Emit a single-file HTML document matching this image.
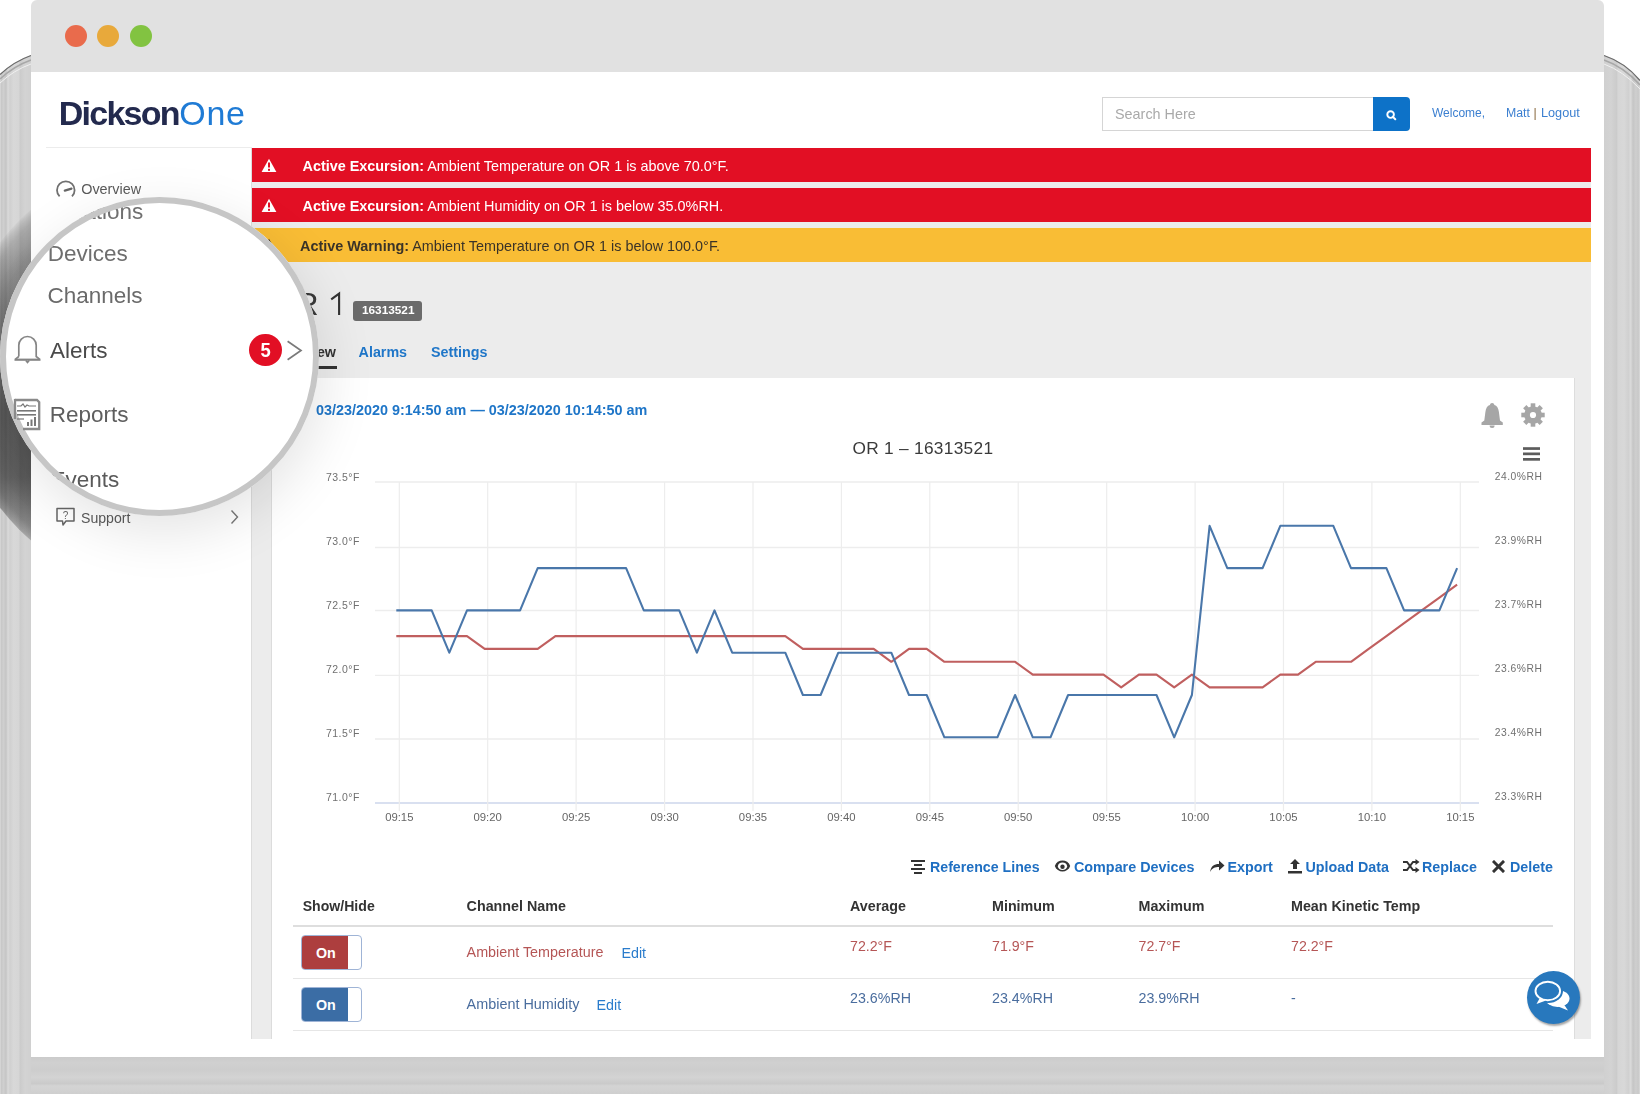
<!DOCTYPE html>
<html><head><meta charset="utf-8"><style>
html,body{margin:0;padding:0;}
body{width:1640px;height:1094px;overflow:hidden;position:relative;background:#fff;font-family:"Liberation Sans", sans-serif;}
.t{position:absolute;white-space:nowrap;line-height:1;}
.r{position:absolute;}
svg{position:absolute;left:0;top:0;}
</style></head><body>
<svg width="1640" height="1094" viewBox="0 0 1640 1094" style="left:0;top:0"><defs><linearGradient id="gL" x1="0" y1="0" x2="1" y2="0"><stop offset="0.0000" stop-color="#dadada"/><stop offset="0.0484" stop-color="#c8c8c8"/><stop offset="0.1129" stop-color="#cfcfcf"/><stop offset="0.1935" stop-color="#c5c5c5"/><stop offset="0.2581" stop-color="#dadada"/><stop offset="0.3226" stop-color="#d0d0d0"/><stop offset="0.4355" stop-color="#d8d8d8"/><stop offset="0.6129" stop-color="#d6d6d6"/><stop offset="0.6452" stop-color="#cbcbcb"/><stop offset="0.8065" stop-color="#d3d3d3"/><stop offset="1.0000" stop-color="#d0d0d0"/></linearGradient><linearGradient id="gR" x1="0" y1="0" x2="1" y2="0"><stop offset="0.0000" stop-color="#d0d0d0"/><stop offset="0.1935" stop-color="#d3d3d3"/><stop offset="0.3548" stop-color="#cbcbcb"/><stop offset="0.3871" stop-color="#d6d6d6"/><stop offset="0.5645" stop-color="#d8d8d8"/><stop offset="0.6774" stop-color="#d0d0d0"/><stop offset="0.7419" stop-color="#dadada"/><stop offset="0.8065" stop-color="#c5c5c5"/><stop offset="0.8871" stop-color="#cfcfcf"/><stop offset="0.9516" stop-color="#c8c8c8"/><stop offset="1.0000" stop-color="#dadada"/></linearGradient><linearGradient id="gB" x1="0" y1="0" x2="0" y2="1"><stop offset="0" stop-color="#cbcbcb"/><stop offset="0.15" stop-color="#d0d0d0"/><stop offset="0.35" stop-color="#cdcdcd"/><stop offset="0.55" stop-color="#d3d3d3"/><stop offset="0.72" stop-color="#cacaca"/><stop offset="0.78" stop-color="#d4d4d4"/><stop offset="1" stop-color="#cfcfcf"/></linearGradient></defs><path d="M31,55 Q14,61 0,74 V1094 H31 Z" fill="url(#gL)"/><path d="M31,55.5 Q14,61.5 0,74.5" fill="none" stroke="#6a6a6a" stroke-width="1.2"/><path d="M31,60 Q14,66 0,79" fill="none" stroke="#a8a8a8" stroke-width="1.6"/><path d="M31,64 Q14,70 0,83" fill="none" stroke="#f0f0f0" stroke-width="1"/><path d="M1604,55 Q1625,62 1640,80 V1094 H1604 Z" fill="url(#gR)" transform="translate(0,0)"/><path d="M1604,55.5 Q1625,62.5 1640,80.5" fill="none" stroke="#6a6a6a" stroke-width="1.2"/><path d="M1604,60 Q1624,67 1640,85" fill="none" stroke="#a8a8a8" stroke-width="1.6"/><path d="M1604,64 Q1623,71 1640,89" fill="none" stroke="#f0f0f0" stroke-width="1"/><rect x="31" y="1057" width="1573" height="37" fill="url(#gB)"/></svg>
<div class="r" style="left:0;top:55px;width:31px;height:1039px;overflow:hidden;"><div class="r" style="left:-45.5px;top:102px;width:436px;height:436px;border-radius:50%;mix-blend-mode:multiply;background:radial-gradient(circle 218px at 218px 218px,#a0a0a0 0px,#a0a0a0 163px,#b2b2b2 188px,#cecece 208px,#e8e8e8 215px,#ffffff 219px),linear-gradient(180deg,#fff 0px,#fff 90px,#a6a6a6 250px,#a0a0a0 320px,#dedede 395px,#fff 436px);background-blend-mode:multiply;"></div></div>
<div class="r" style="left:31px;top:0px;width:1573px;height:1057px;background:#fff;border-radius:6px 6px 0 0;overflow:hidden;"></div>
<div class="r" style="left:31px;top:0px;width:1573px;height:72px;background:#e1e1e1;border-radius:6px 6px 0 0;"></div>
<div class="r" style="left:64.5px;top:25.3px;width:22px;height:22px;background:#e96b4c;border-radius:50%;"></div>
<div class="r" style="left:97.3px;top:25.3px;width:22px;height:22px;background:#e8a93b;border-radius:50%;"></div>
<div class="r" style="left:130.3px;top:25.3px;width:22px;height:22px;background:#82c341;border-radius:50%;"></div>
<div class="t" style="left:58.8px;top:96.2px;font-size:34px;color:#232a4e;font-weight:bold;"><span style="letter-spacing:-1.75px">Dickson</span><span style="color:#1f7bd5;font-weight:normal;letter-spacing:0.7px;margin-left:0.5px">One</span></div>
<div class="r" style="left:46px;top:146.5px;width:206px;height:1.5px;background:#ececec;"></div>
<div class="r" style="left:1102px;top:97px;width:271px;height:34px;background:#fff;box-sizing:border-box;border:1px solid #d5d5d5;border-right:none;"></div>
<div class="t" style="left:1115.0px;top:107.3px;font-size:14.4px;color:#a9a9a9;">Search Here</div>
<div class="r" style="left:1373px;top:97px;width:37px;height:34px;background:#0d72c8;border-radius:0 4px 4px 0;"></div>
<svg style="left:1383px;top:107px" width="16" height="16" viewBox="0 0 16 16"><circle cx="7.6" cy="7.6" r="3.3" fill="none" stroke="#fff" stroke-width="1.9"/><line x1="9.9" y1="9.9" x2="12.3" y2="12.3" stroke="#fff" stroke-width="2" stroke-linecap="round"/></svg>
<div class="t" style="left:1432.0px;top:107.3px;font-size:12px;color:#3b7fd0;">Welcome,</div>
<div class="t" style="left:1506.0px;top:107.1px;font-size:12.3px;color:#3b7fd0;">Matt</div>
<div class="t" style="left:1533.5px;top:107.1px;font-size:12.3px;color:#8a6a40;">|</div>
<div class="t" style="left:1541.0px;top:106.7px;font-size:12.7px;color:#3b7fd0;">Logout</div>
<svg style="left:54px;top:178px" width="24" height="20" viewBox="0 0 24 20"><path d="M5.6 18.4 A8.8 8.8 0 1 1 18 18.4" fill="none" stroke="#707070" stroke-width="1.8"/><line x1="10.8" y1="12.6" x2="17.5" y2="10.6" stroke="#666" stroke-width="2.2" stroke-linecap="round"/></svg>
<div class="t" style="left:81.2px;top:182.3px;font-size:14.4px;color:#5a5a5a;">Overview</div>
<svg style="left:55px;top:506px" width="22" height="22" viewBox="0 0 22 22"><path d="M2 2.5 H19 V15 H11 L8 19 L7.5 15 H2 Z" fill="none" stroke="#666" stroke-width="1.5" stroke-linejoin="round"/><text x="10.5" y="12.5" font-size="10" font-family="Liberation Sans" fill="#666" text-anchor="middle">?</text></svg>
<div class="t" style="left:80.5px;top:509.5px;font-size:15px;color:#5a5a5a;transform:scaleX(0.94);transform-origin:0 0;">Support</div>
<svg style="left:228px;top:508px" width="12" height="18" viewBox="0 0 12 18"><path d="M3.5 2.5 L9.5 9 L3.5 15.5" fill="none" stroke="#777" stroke-width="1.4"/></svg>
<div class="r" style="left:251px;top:148px;width:1340px;height:891px;background:#ececec;"></div>
<div class="r" style="left:251px;top:148px;width:1px;height:891px;background:#dcdcdc;"></div>
<div class="r" style="left:252px;top:148px;width:1339px;height:34px;background:#e20f24;"></div>
<div class="r" style="left:252px;top:188px;width:1339px;height:34px;background:#e20f24;"></div>
<div class="r" style="left:252px;top:228px;width:1339px;height:34px;background:#f9bd35;"></div>
<svg style="left:261px;top:158px" width="16" height="15" viewBox="0 0 16 15"><path d="M8 0.8 L15.4 14 H0.6 Z" fill="#fff"/><rect x="7" y="4.5" width="2" height="5" fill="#e20f24"/><rect x="7" y="10.8" width="2" height="2" fill="#e20f24"/></svg>
<svg style="left:261px;top:198px" width="16" height="15" viewBox="0 0 16 15"><path d="M8 0.8 L15.4 14 H0.6 Z" fill="#fff"/><rect x="7" y="4.5" width="2" height="5" fill="#e20f24"/><rect x="7" y="10.8" width="2" height="2" fill="#e20f24"/></svg>
<svg style="left:261px;top:238px" width="16" height="15" viewBox="0 0 16 15"><path d="M8 0.8 L15.4 14 H0.6 Z" fill="#3a3020"/><rect x="7" y="4.5" width="2" height="5" fill="#f9bd35"/><rect x="7" y="10.8" width="2" height="2" fill="#f9bd35"/></svg>
<div class="t" style="left:302.5px;top:158.8px;font-size:14.4px;color:#fff;"><b>Active Excursion:</b> Ambient Temperature on OR 1 is above 70.0°F.</div>
<div class="t" style="left:302.5px;top:198.8px;font-size:14.4px;color:#fff;"><b>Active Excursion:</b> Ambient Humidity on OR 1 is below 35.0%RH.</div>
<div class="t" style="left:300.0px;top:238.8px;font-size:14.4px;color:#3a3328;"><b>Active Warning:</b> Ambient Temperature on OR 1 is below 100.0°F.</div>
<div class="t" style="left:270.7px;top:287.7px;font-size:32px;color:#3a3a3a;">OR</div>
<svg style="left:326px;top:288px" width="20" height="30" viewBox="0 0 20 30"><path d="M13.1 27 V5.6 L5.2 11.4" fill="none" stroke="#333" stroke-width="2.1" stroke-linejoin="miter"/></svg>
<div class="r" style="left:353px;top:301px;width:69px;height:20px;background:#6b6b6b;border-radius:3px;"></div>
<div class="t" style="left:362.0px;top:304.8px;font-size:11.8px;color:#fff;font-weight:bold;">16313521</div>
<div class="t" style="left:272.4px;top:344.8px;font-size:14.3px;color:#333;font-weight:bold;">Overview</div>
<div class="r" style="left:270px;top:365.5px;width:66.5px;height:3.5px;background:#333;"></div>
<div class="t" style="left:358.6px;top:344.8px;font-size:14.3px;color:#1f76c8;font-weight:bold;">Alarms</div>
<div class="t" style="left:431.0px;top:344.8px;font-size:14.3px;color:#1f76c8;font-weight:bold;">Settings</div>
<div class="r" style="left:272px;top:378px;width:1302px;height:661px;background:#fff;"></div>
<div class="r" style="left:1574px;top:378px;width:1px;height:661px;background:#dddddd;"></div>
<div class="r" style="left:271px;top:378px;width:1px;height:661px;background:#dcdcdc;"></div>
<div class="t" style="left:316.0px;top:402.8px;font-size:14.4px;color:#1f76c8;font-weight:bold;">03/23/2020 9:14:50 am — 03/23/2020 10:14:50 am</div>
<div class="t" style="left:852.4px;top:440.4px;font-size:17.3px;color:#3a3a3a;letter-spacing:0.3px;">OR 1 – 16313521</div>
<svg style="left:1480px;top:402px" width="26" height="27" viewBox="0 0 26 27"><path d="M12.1 1 C10.8 1 10.2 1.8 9.9 2.9 C7.4 3.6 5.8 6 5.4 10 L4.3 18.6 L1.5 20.6 V23 H22.8 V20.6 L20 18.6 L18.9 10 C18.5 6 16.9 3.6 14.4 2.9 C14.1 1.8 13.5 1 12.1 1 Z" fill="#a6a6a6"/><path d="M9.6 23.6 A2.5 2.5 0 0 0 14.6 23.6 Z" fill="#a6a6a6"/></svg>
<svg style="left:1520px;top:403px" width="26" height="24" viewBox="0 0 26 24"><g fill="#a6a6a6"><circle cx="13" cy="12" r="8.8"/><rect x="10.7" y="0.3" width="4.6" height="23.4" transform="rotate(0 13 12)"/><rect x="10.7" y="0.3" width="4.6" height="23.4" transform="rotate(45 13 12)"/><rect x="10.7" y="0.3" width="4.6" height="23.4" transform="rotate(90 13 12)"/><rect x="10.7" y="0.3" width="4.6" height="23.4" transform="rotate(135 13 12)"/></g><circle cx="13" cy="12" r="3.1" fill="#fff"/></svg>
<svg style="left:1521px;top:445px" width="20" height="17" viewBox="0 0 20 17"><g fill="#5c5c5c"><rect x="2" y="2.2" width="17" height="2.7"/><rect x="2" y="7.5" width="17" height="2.7"/><rect x="2" y="13" width="17" height="2.7"/></g></svg>
<svg width="1640" height="1094" viewBox="0 0 1640 1094">
<line x1="375" y1="482.0" x2="1479" y2="482.0" stroke="#ededed" stroke-width="1.3"/>
<line x1="375" y1="547.5" x2="1479" y2="547.5" stroke="#ededed" stroke-width="1.3"/>
<line x1="375" y1="610.5" x2="1479" y2="610.5" stroke="#ededed" stroke-width="1.3"/>
<line x1="375" y1="675.3" x2="1479" y2="675.3" stroke="#ededed" stroke-width="1.3"/>
<line x1="375" y1="739.0" x2="1479" y2="739.0" stroke="#ededed" stroke-width="1.3"/>
<line x1="375" y1="803.0" x2="1479" y2="803.0" stroke="#ccd6eb" stroke-width="1.3"/>
<line x1="399.3" y1="482" x2="399.3" y2="811" stroke="#ededed" stroke-width="1.2"/>
<line x1="487.7" y1="482" x2="487.7" y2="811" stroke="#ededed" stroke-width="1.2"/>
<line x1="576.1" y1="482" x2="576.1" y2="811" stroke="#ededed" stroke-width="1.2"/>
<line x1="664.6" y1="482" x2="664.6" y2="811" stroke="#ededed" stroke-width="1.2"/>
<line x1="753.0" y1="482" x2="753.0" y2="811" stroke="#ededed" stroke-width="1.2"/>
<line x1="841.4" y1="482" x2="841.4" y2="811" stroke="#ededed" stroke-width="1.2"/>
<line x1="929.8" y1="482" x2="929.8" y2="811" stroke="#ededed" stroke-width="1.2"/>
<line x1="1018.2" y1="482" x2="1018.2" y2="811" stroke="#ededed" stroke-width="1.2"/>
<line x1="1106.7" y1="482" x2="1106.7" y2="811" stroke="#ededed" stroke-width="1.2"/>
<line x1="1195.1" y1="482" x2="1195.1" y2="811" stroke="#ededed" stroke-width="1.2"/>
<line x1="1283.5" y1="482" x2="1283.5" y2="811" stroke="#ededed" stroke-width="1.2"/>
<line x1="1371.9" y1="482" x2="1371.9" y2="811" stroke="#ededed" stroke-width="1.2"/>
<line x1="1460.3" y1="482" x2="1460.3" y2="811" stroke="#ededed" stroke-width="1.2"/>
<polyline points="396.3,636.1 414.0,636.1 431.7,636.1 449.3,636.1 467.0,636.1 484.7,648.9 502.4,648.9 520.1,648.9 537.7,648.9 555.4,636.1 573.1,636.1 590.8,636.1 608.5,636.1 626.1,636.1 643.8,636.1 661.5,636.1 679.2,636.1 696.9,636.1 714.5,636.1 732.2,636.1 749.9,636.1 767.6,636.1 785.3,636.1 802.9,648.9 820.6,648.9 838.3,648.9 856.0,648.9 873.7,648.9 891.3,661.8 909.0,648.9 926.7,648.9 944.4,661.8 962.1,661.8 979.7,661.8 997.4,661.8 1015.1,661.8 1032.8,674.6 1050.5,674.6 1068.1,674.6 1085.8,674.6 1103.5,674.6 1121.2,687.4 1138.9,674.6 1156.5,674.6 1174.2,687.4 1191.9,674.6 1209.6,687.4 1227.3,687.4 1244.9,687.4 1262.6,687.4 1280.3,674.6 1298.0,674.6 1315.7,661.8 1333.3,661.8 1351.0,661.8 1368.7,648.9 1386.4,636.1 1404.1,623.2 1421.7,610.4 1439.4,597.6 1457.1,584.7" fill="none" stroke="#c05f5f" stroke-width="2.1" stroke-linejoin="round"/>
<polyline points="396.3,610.4 414.0,610.4 431.7,610.4 449.3,652.7 467.0,610.4 484.7,610.4 502.4,610.4 520.1,610.4 537.7,568.1 555.4,568.1 573.1,568.1 590.8,568.1 608.5,568.1 626.1,568.1 643.8,610.4 661.5,610.4 679.2,610.4 696.9,652.7 714.5,610.4 732.2,652.7 749.9,652.7 767.6,652.7 785.3,652.7 802.9,695.0 820.6,695.0 838.3,652.7 856.0,652.7 873.7,652.7 891.3,652.7 909.0,695.0 926.7,695.0 944.4,737.3 962.1,737.3 979.7,737.3 997.4,737.3 1015.1,695.0 1032.8,737.3 1050.5,737.3 1068.1,695.0 1085.8,695.0 1103.5,695.0 1121.2,695.0 1138.9,695.0 1156.5,695.0 1174.2,737.3 1191.9,695.0 1209.6,525.8 1227.3,568.1 1244.9,568.1 1262.6,568.1 1280.3,525.8 1298.0,525.8 1315.7,525.8 1333.3,525.8 1351.0,568.1 1368.7,568.1 1386.4,568.1 1404.1,610.4 1421.7,610.4 1439.4,610.4 1457.1,568.1" fill="none" stroke="#4a77aa" stroke-width="2.1" stroke-linejoin="round"/>
</svg>
<div class="t" style="left:326.0px;top:471.7px;font-size:10.5px;color:#707070;letter-spacing:0.45px;">73.5°F</div>
<div class="t" style="left:1494.8px;top:471.9px;font-size:10.3px;color:#707070;letter-spacing:0.5px;">24.0%RH</div>
<div class="t" style="left:326.0px;top:535.7px;font-size:10.5px;color:#707070;letter-spacing:0.45px;">73.0°F</div>
<div class="t" style="left:1494.8px;top:535.8px;font-size:10.3px;color:#707070;letter-spacing:0.5px;">23.9%RH</div>
<div class="t" style="left:326.0px;top:599.6px;font-size:10.5px;color:#707070;letter-spacing:0.45px;">72.5°F</div>
<div class="t" style="left:1494.8px;top:599.8px;font-size:10.3px;color:#707070;letter-spacing:0.5px;">23.7%RH</div>
<div class="t" style="left:326.0px;top:663.6px;font-size:10.5px;color:#707070;letter-spacing:0.45px;">72.0°F</div>
<div class="t" style="left:1494.8px;top:663.7px;font-size:10.3px;color:#707070;letter-spacing:0.5px;">23.6%RH</div>
<div class="t" style="left:326.0px;top:727.5px;font-size:10.5px;color:#707070;letter-spacing:0.45px;">71.5°F</div>
<div class="t" style="left:1494.8px;top:727.7px;font-size:10.3px;color:#707070;letter-spacing:0.5px;">23.4%RH</div>
<div class="t" style="left:326.0px;top:791.5px;font-size:10.5px;color:#707070;letter-spacing:0.45px;">71.0°F</div>
<div class="t" style="left:1494.8px;top:791.6px;font-size:10.3px;color:#707070;letter-spacing:0.5px;">23.3%RH</div>
<div class="t" style="left:359.3px;width:80px;text-align:center;top:812.4px;font-size:11.3px;color:#666;">09:15</div>
<div class="t" style="left:447.7px;width:80px;text-align:center;top:812.4px;font-size:11.3px;color:#666;">09:20</div>
<div class="t" style="left:536.1px;width:80px;text-align:center;top:812.4px;font-size:11.3px;color:#666;">09:25</div>
<div class="t" style="left:624.6px;width:80px;text-align:center;top:812.4px;font-size:11.3px;color:#666;">09:30</div>
<div class="t" style="left:713.0px;width:80px;text-align:center;top:812.4px;font-size:11.3px;color:#666;">09:35</div>
<div class="t" style="left:801.4px;width:80px;text-align:center;top:812.4px;font-size:11.3px;color:#666;">09:40</div>
<div class="t" style="left:889.8px;width:80px;text-align:center;top:812.4px;font-size:11.3px;color:#666;">09:45</div>
<div class="t" style="left:978.2px;width:80px;text-align:center;top:812.4px;font-size:11.3px;color:#666;">09:50</div>
<div class="t" style="left:1066.7px;width:80px;text-align:center;top:812.4px;font-size:11.3px;color:#666;">09:55</div>
<div class="t" style="left:1155.1px;width:80px;text-align:center;top:812.4px;font-size:11.3px;color:#666;">10:00</div>
<div class="t" style="left:1243.5px;width:80px;text-align:center;top:812.4px;font-size:11.3px;color:#666;">10:05</div>
<div class="t" style="left:1331.9px;width:80px;text-align:center;top:812.4px;font-size:11.3px;color:#666;">10:10</div>
<div class="t" style="left:1420.3px;width:80px;text-align:center;top:812.4px;font-size:11.3px;color:#666;">10:15</div>
<div class="t" style="left:930.0px;top:859.8px;font-size:14.2px;color:#1f6fc2;font-weight:bold;">Reference Lines</div>
<div class="t" style="left:1074.0px;top:859.7px;font-size:14.35px;color:#1f6fc2;font-weight:bold;">Compare Devices</div>
<div class="t" style="left:1227.5px;top:859.7px;font-size:14.3px;color:#1f6fc2;font-weight:bold;">Export</div>
<div class="t" style="left:1305.5px;top:859.7px;font-size:14.3px;color:#1f6fc2;font-weight:bold;">Upload Data</div>
<div class="t" style="left:1422.0px;top:859.7px;font-size:14.3px;color:#1f6fc2;font-weight:bold;">Replace</div>
<div class="t" style="left:1510.0px;top:859.7px;font-size:14.3px;color:#1f6fc2;font-weight:bold;">Delete</div>
<svg style="left:910px;top:859px" width="16" height="16" viewBox="0 0 16 16"><g fill="#333"><rect x="1" y="1" width="14" height="2"/><rect x="4" y="5" width="8" height="2"/><rect x="1" y="9" width="14" height="2"/><rect x="4" y="13" width="8" height="2"/></g></svg>
<svg style="left:1054px;top:859px" width="17" height="14" viewBox="0 0 17 14"><path d="M0.8 7 C3.3 -0.3 13.7 -0.3 16.2 7 C13.7 14.3 3.3 14.3 0.8 7 Z" fill="#333"/><ellipse cx="8.5" cy="7.3" rx="4.6" ry="3.8" fill="#fff"/><circle cx="8.5" cy="7.8" r="2.2" fill="#333"/></svg>
<svg style="left:1209px;top:859px" width="16" height="14" viewBox="0 0 16 14"><path d="M1 13 C2 7 5 5 10 5 V1.5 L15.5 6.5 L10 11.5 V8 C6 8 3 9 1 13 Z" fill="#333"/></svg>
<svg style="left:1287px;top:858px" width="16" height="16" viewBox="0 0 16 16"><g fill="#333"><path d="M8 1 L13 6 H10 V11 H6 V6 H3 Z"/><rect x="1" y="13" width="14" height="2.5"/></g></svg>
<svg style="left:1402px;top:859px" width="18" height="14" viewBox="0 0 18 14"><g fill="none" stroke="#333" stroke-width="2"><path d="M1 3 H5 L11 11 H14"/><path d="M1 11 H5 L11 3 H14"/></g><g fill="#333"><path d="M13.5 0 L17.5 3 L13.5 6 Z"/><path d="M13.5 8 L17.5 11 L13.5 14 Z"/></g></svg>
<svg style="left:1492px;top:860px" width="13" height="13" viewBox="0 0 13 13"><g stroke="#333" stroke-width="3" stroke-linecap="square"><line x1="2" y1="2" x2="11" y2="11"/><line x1="11" y1="2" x2="2" y2="11"/></g></svg>
<div class="t" style="left:302.7px;top:899.1px;font-size:14.1px;color:#333;font-weight:bold;">Show/Hide</div>
<div class="t" style="left:466.6px;top:898.9px;font-size:14.3px;color:#333;font-weight:bold;">Channel Name</div>
<div class="t" style="left:850.0px;top:898.9px;font-size:14.3px;color:#333;font-weight:bold;">Average</div>
<div class="t" style="left:992.0px;top:898.9px;font-size:14.3px;color:#333;font-weight:bold;">Minimum</div>
<div class="t" style="left:1138.5px;top:898.9px;font-size:14.3px;color:#333;font-weight:bold;">Maximum</div>
<div class="t" style="left:1291.0px;top:898.9px;font-size:14.3px;color:#333;font-weight:bold;">Mean Kinetic Temp</div>
<div class="r" style="left:293px;top:925px;width:1260px;height:2px;background:#dedede;"></div>
<div class="r" style="left:293px;top:978px;width:1260px;height:1px;background:#e6e6e6;"></div>
<div class="r" style="left:293px;top:1030px;width:1260px;height:1px;background:#e6e6e6;"></div>
<div class="r" style="left:301px;top:935px;width:61px;height:35px;background:#fff;box-sizing:border-box;border:1px solid #9fb4d6;border-radius:4px;"></div>
<div class="r" style="left:302px;top:936px;width:46px;height:33px;background:#ad3e3e;border-radius:3px 0 0 3px;"></div>
<div class="t" style="left:316.0px;top:946.2px;font-size:14.3px;color:#fff;font-weight:bold;">On</div>
<div class="r" style="left:301px;top:987px;width:61px;height:35px;background:#fff;box-sizing:border-box;border:1px solid #9fb4d6;border-radius:4px;"></div>
<div class="r" style="left:302px;top:988px;width:46px;height:33px;background:#3b6da5;border-radius:3px 0 0 3px;"></div>
<div class="t" style="left:316.0px;top:998.2px;font-size:14.3px;color:#fff;font-weight:bold;">On</div>
<div class="t" style="left:466.6px;top:944.9px;font-size:14.35px;color:#b55656;">Ambient Temperature</div>
<div class="t" style="left:621.4px;top:945.9px;font-size:14.3px;color:#2a7ccc;">Edit</div>
<div class="t" style="left:466.6px;top:997.2px;font-size:14.4px;color:#4a6d9e;">Ambient Humidity</div>
<div class="t" style="left:596.5px;top:997.9px;font-size:14.3px;color:#2a7ccc;">Edit</div>
<div class="t" style="left:850.0px;top:939.0px;font-size:14.2px;color:#b55656;">72.2°F</div>
<div class="t" style="left:992.0px;top:939.0px;font-size:14.2px;color:#b55656;">71.9°F</div>
<div class="t" style="left:1138.5px;top:939.0px;font-size:14.2px;color:#b55656;">72.7°F</div>
<div class="t" style="left:1291.0px;top:939.0px;font-size:14.2px;color:#b55656;">72.2°F</div>
<div class="t" style="left:850.0px;top:990.9px;font-size:14.25px;color:#4a6d9e;">23.6%RH</div>
<div class="t" style="left:992.0px;top:990.9px;font-size:14.25px;color:#4a6d9e;">23.4%RH</div>
<div class="t" style="left:1138.5px;top:990.9px;font-size:14.25px;color:#4a6d9e;">23.9%RH</div>
<div class="t" style="left:1291.0px;top:990.9px;font-size:14.25px;color:#4a6d9e;">-</div>
<div class="r" style="left:1526.5px;top:970.5px;width:53.5px;height:53.5px;background:#2878bd;border-radius:50%;box-shadow:1px 2px 2px rgba(0,0,0,0.35);"></div>
<svg style="left:1526px;top:970px" width="54" height="54" viewBox="0 0 54 54"><ellipse cx="31.5" cy="28.5" rx="12" ry="8.5" fill="#fff"/><path d="M37 33 L42 40.5 L31 36 Z" fill="#fff"/><ellipse cx="22" cy="21" rx="15" ry="12" fill="#2878bd"/><ellipse cx="21.8" cy="21" rx="12.3" ry="9.3" fill="none" stroke="#fff" stroke-width="1.9"/><path d="M13.5 28.5 L10.5 34 L20 30.5 Z" fill="#fff"/></svg>
<div class="r" style="left:0.30000000000001137px;top:196.7px;width:319.0px;height:319.0px;border-radius:50%;background:#fff;box-shadow:4px 16px 55px rgba(0,0,0,0.11);"></div>
<div class="r" style="left:0.30000000000001137px;top:196.7px;width:319.0px;height:319.0px;border-radius:50%;overflow:hidden;"><div class="t" style="left:46.7px;top:4.3px;font-size:22.5px;color:#707070;">Locations</div>
<div class="t" style="left:47.5px;top:46.5px;font-size:22.5px;color:#6e6e6e;">Devices</div>
<div class="t" style="left:47.2px;top:88.3px;font-size:22.5px;color:#6a6a6a;">Channels</div>
<div class="t" style="left:49.7px;top:143.1px;font-size:22.5px;color:#4a4a4a;">Alerts</div>
<div class="t" style="left:49.5px;top:207.3px;font-size:22.5px;color:#5e5e5e;">Reports</div>
<div class="t" style="left:50.2px;top:272.3px;font-size:22.5px;color:#5a5a5a;">Events</div>
</div>
<div class="r" style="left:0.30000000000001137px;top:196.7px;width:319.0px;height:319.0px;border-radius:50%;box-sizing:border-box;border:6.3px solid #c6c6c6;"></div>
<svg style="left:12px;top:334px" width="32" height="31" viewBox="0 0 32 31"><g fill="none" stroke="#858585" stroke-width="1.7"><path d="M6.8 22.5 V11.2 A8.7 8.7 0 0 1 24.2 11.2 V22.5 L27.5 25.2 M6.8 22.5 L3.5 25.2"/><path d="M2.5 25.7 H28.5" stroke-width="2.2"/><path d="M13.8 26.5 L15.5 28.6 L17.2 26.5" stroke-width="1.5"/></g></svg>
<svg style="left:12px;top:397px" width="30" height="35" viewBox="0 0 30 35"><path d="M3 3 H25 L27.2 5.2 V32 H11" fill="none" stroke="#8a8a8a" stroke-width="2.3"/><path d="M3 1.9 V22" stroke="#8a8a8a" stroke-width="2.3"/><path d="M5 9 H9 L11 7 L13 10 L15 8 L17 9 H24" fill="none" stroke="#777" stroke-width="1.2"/><rect x="5" y="13" width="19" height="1.6" fill="#777"/><rect x="5" y="17" width="19" height="1.6" fill="#777"/><path d="M5 22 H12" stroke="#777" stroke-width="1.2"/><rect x="15" y="25" width="2" height="4" fill="#777"/><rect x="18.5" y="22.5" width="2" height="6.5" fill="#777"/><rect x="22" y="20" width="2" height="9" fill="#777"/></svg>
<div class="r" style="left:248.5px;top:333.6px;width:33px;height:32.7px;background:#e20f24;border-radius:50%;"></div>
<div class="t" style="left:248.5px;width:33px;text-align:center;top:340.3px;font-size:20px;font-weight:bold;color:#fff;transform:scaleX(0.92);">5</div>
<svg style="left:284px;top:339px" width="20" height="23" viewBox="0 0 20 23"><path d="M3.6 2.2 L17 11.5 L3.6 20.8" fill="none" stroke="#7a7a7a" stroke-width="1.7"/></svg>
</body></html>
